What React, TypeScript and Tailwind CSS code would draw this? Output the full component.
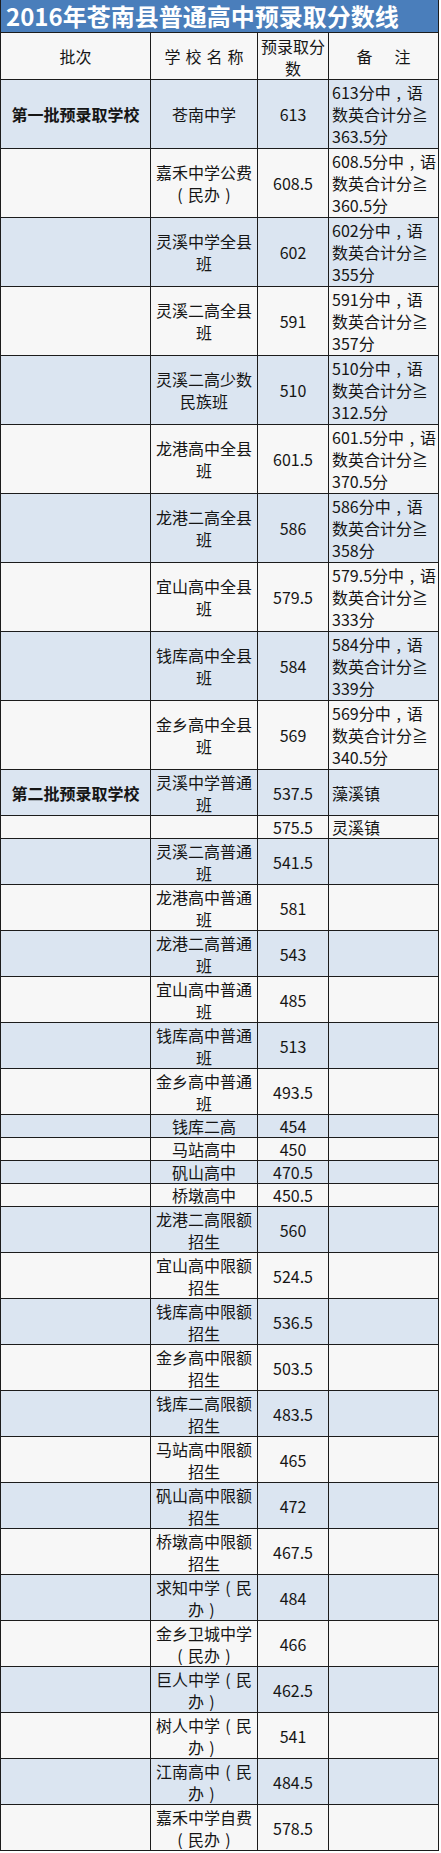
import React from "react";

type Row = {
  batch?: string;
  school: string[];
  score: string;
  note?: string[];
  lines: 1 | 2 | 3;
};

const heights: Record<number, string> = {
  1: "h-[23px]",
  2: "h-[46px]",
  3: "h-[69px]",
};

const quota = (s: string[], score: string, lines: 1 | 2 | 3 = 2): Row => ({ school: s, score, lines });

const firstBatch: Row[] = [
  { batch: "第一批预录取学校", school: ["苍南中学"], score: "613", note: ["613分中，语", "数英合计分≧", "363.5分"], lines: 3 },
  { school: ["嘉禾中学公费", "（民办）"], score: "608.5", note: ["608.5分中，语", "数英合计分≧", "360.5分"], lines: 3 },
  { school: ["灵溪中学全县", "班"], score: "602", note: ["602分中，语", "数英合计分≧", "355分"], lines: 3 },
  { school: ["灵溪二高全县", "班"], score: "591", note: ["591分中，语", "数英合计分≧", "357分"], lines: 3 },
  { school: ["灵溪二高少数", "民族班"], score: "510", note: ["510分中，语", "数英合计分≧", "312.5分"], lines: 3 },
  { school: ["龙港高中全县", "班"], score: "601.5", note: ["601.5分中，语", "数英合计分≧", "370.5分"], lines: 3 },
  { school: ["龙港二高全县", "班"], score: "586", note: ["586分中，语", "数英合计分≧", "358分"], lines: 3 },
  { school: ["宜山高中全县", "班"], score: "579.5", note: ["579.5分中，语", "数英合计分≧", "333分"], lines: 3 },
  { school: ["钱库高中全县", "班"], score: "584", note: ["584分中，语", "数英合计分≧", "339分"], lines: 3 },
  { school: ["金乡高中全县", "班"], score: "569", note: ["569分中，语", "数英合计分≧", "340.5分"], lines: 3 },
];

const secondBatch: Row[] = [
  { batch: "第二批预录取学校", school: ["灵溪中学普通", "班"], score: "537.5", note: ["藻溪镇"], lines: 2 },
  { school: [], score: "575.5", note: ["灵溪镇"], lines: 1 },
  quota(["灵溪二高普通", "班"], "541.5"),
  quota(["龙港高中普通", "班"], "581"),
  quota(["龙港二高普通", "班"], "543"),
  quota(["宜山高中普通", "班"], "485"),
  quota(["钱库高中普通", "班"], "513"),
  quota(["金乡高中普通", "班"], "493.5"),
  quota(["钱库二高"], "454", 1),
  quota(["马站高中"], "450", 1),
  quota(["矾山高中"], "470.5", 1),
  quota(["桥墩高中"], "450.5", 1),
  quota(["龙港二高限额", "招生"], "560"),
  quota(["宜山高中限额", "招生"], "524.5"),
  quota(["钱库高中限额", "招生"], "536.5"),
  quota(["金乡高中限额", "招生"], "503.5"),
  quota(["钱库二高限额", "招生"], "483.5"),
  quota(["马站高中限额", "招生"], "465"),
  quota(["矾山高中限额", "招生"], "472"),
  quota(["桥墩高中限额", "招生"], "467.5"),
  quota(["求知中学（民", "办）"], "484"),
  quota(["金乡卫城中学", "（民办）"], "466"),
  quota(["巨人中学（民", "办）"], "462.5"),
  quota(["树人中学（民", "办）"], "541"),
  quota(["江南高中（民", "办）"], "484.5"),
  quota(["嘉禾中学自费", "（民办）"], "578.5"),
];

const rows = [...firstBatch, ...secondBatch];

const cell = "flex border-r border-b border-[#1c1c1c]";

// full-width punctuation gets a whole 16px box, as in the sheet
const wide: Record<string, string> = { "（": "(", "）": ")", "，": "," };

function Line({ text }: { text: string }) {
  return (
    <span>
      {Array.from(text).map((ch, i) =>
        wide[ch] ? (
          <span key={i} className="inline-block w-[16px] text-center">
            {wide[ch]}
          </span>
        ) : (
          ch
        )
      )}
    </span>
  );
}

export default function App() {
  return (
    <div className="min-h-[1853px] w-[441px] bg-white font-['Noto_Sans_CJK_SC','Microsoft_YaHei',sans-serif] text-[16px] text-[#151515]">
      <div className="w-[439px] border-l border-[#1c1c1c]">
        {/* Title */}
        <div className="flex h-[33px] items-center border-r border-b border-[#1c1c1c] bg-[#4a7ebb] pl-[5px]">
          <span className="text-[24px] font-bold leading-none text-white">2016年苍南县普通高中预录取分数线</span>
        </div>

        {/* Header */}
        <div className="grid h-[47px] grid-cols-[150px_107px_71px_110px] bg-[#f7f7f7] leading-[22px]">
          <div className={`${cell} items-center justify-center`}>批次</div>
          <div className={`${cell} items-center justify-center`}>
            <span className="tracking-[5px] pl-[5px]">学校名称</span>
          </div>
          <div className={`${cell} flex-col items-center justify-center pt-[2px]`}>
            <span>预录取分</span>
            <span>数</span>
          </div>
          <div className={`${cell} items-center justify-center gap-[22px]`}>
            <span>备</span>
            <span>注</span>
          </div>
        </div>

        {/* Body */}
        {rows.map((r, i) => (
          <div
            key={i}
            className={`grid grid-cols-[150px_107px_71px_110px] leading-[22px] ${heights[r.lines]} ${
              i % 2 === 0 ? "bg-[#dbe5f1]" : "bg-[#f7f7f7]"
            }`}
          >
            <div className={`${cell} items-center justify-center font-bold`}>{r.batch}</div>
            <div className={`${cell} flex-col items-center justify-center whitespace-nowrap`}>
              {r.school.map((s) => (
                <Line key={s} text={s} />
              ))}
            </div>
            <div className={`${cell} items-center justify-center`}>{r.score}</div>
            <div className={`${cell} flex-col justify-center whitespace-nowrap pl-[3px]`}>
              {r.note?.map((n) => (
                <Line key={n} text={n} />
              ))}
            </div>
          </div>
        ))}
      </div>
    </div>
  );
}
